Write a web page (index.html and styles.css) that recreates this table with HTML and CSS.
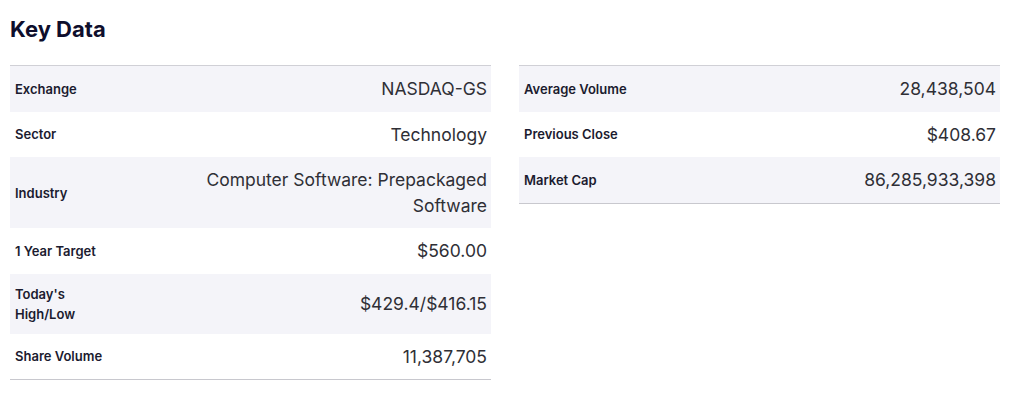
FILE: index.html
```html
<!DOCTYPE html>
<html>
<head>
<meta charset="utf-8">
<link rel="stylesheet" href="styles.css">
</head>
<body>
<section class="key-data">
  <h2 class="title">Key Data</h2>
  <div class="columns">
    <div class="table">
      <div class="row alt"><div class="label">Exchange</div><div class="value">NASDAQ-GS</div></div>
      <div class="row"><div class="label">Sector</div><div class="value">Technology</div></div>
      <div class="row alt"><div class="label">Industry</div><div class="value">Computer Software: Prepackaged Software</div></div>
      <div class="row"><div class="label">1 Year Target</div><div class="value">$560.00</div></div>
      <div class="row alt"><div class="label">Today's High/Low</div><div class="value">$429.4/$416.15</div></div>
      <div class="row"><div class="label">Share Volume</div><div class="value">11,387,705</div></div>
    </div>
    <div class="table">
      <div class="row alt"><div class="label wide">Average Volume</div><div class="value">28,438,504</div></div>
      <div class="row"><div class="label wide">Previous Close</div><div class="value">$408.67</div></div>
      <div class="row alt"><div class="label wide">Market Cap</div><div class="value">86,285,933,398</div></div>
    </div>
  </div>
</section>
</body>
</html>
```

FILE: styles.css
```css
html, body {
  margin: 0;
  padding: 0;
  background: #ffffff;
}
body {
  font-family: Inter, "Noto Sans", sans-serif;
  color: #1b1b2f;
}
.key-data {
  width: 990px;
  padding-left: 10px;
}
.title {
  margin: 15px 0 21px;
  font-size: 22px;
  line-height: 29px;
  font-weight: 700;
  color: #0e0e2c;
}
.columns {
  display: grid;
  grid-template-columns: 481px 481px;
  column-gap: 28px;
  align-items: start;
}
.table {
  border-top: 1px solid #d0d0d6;
  border-bottom: 1px solid #c8c8ce;
}
.row {
  display: flex;
  align-items: center;
  justify-content: space-between;
  padding: 10px 4px 10px 5px;
}
.row.alt {
  background: #f4f4f9;
}
.label {
  width: 96px;
  flex: none;
  font-size: 13px;
  line-height: 20px;
  font-weight: 600;
  color: #1b1b2f;
}
.label.wide {
  width: 160px;
}
.value {
  max-width: 290px;
  text-align: right;
  font-size: 17.5px;
  line-height: 25.5px;
  font-weight: 400;
  color: #2f2f36;
}
```
